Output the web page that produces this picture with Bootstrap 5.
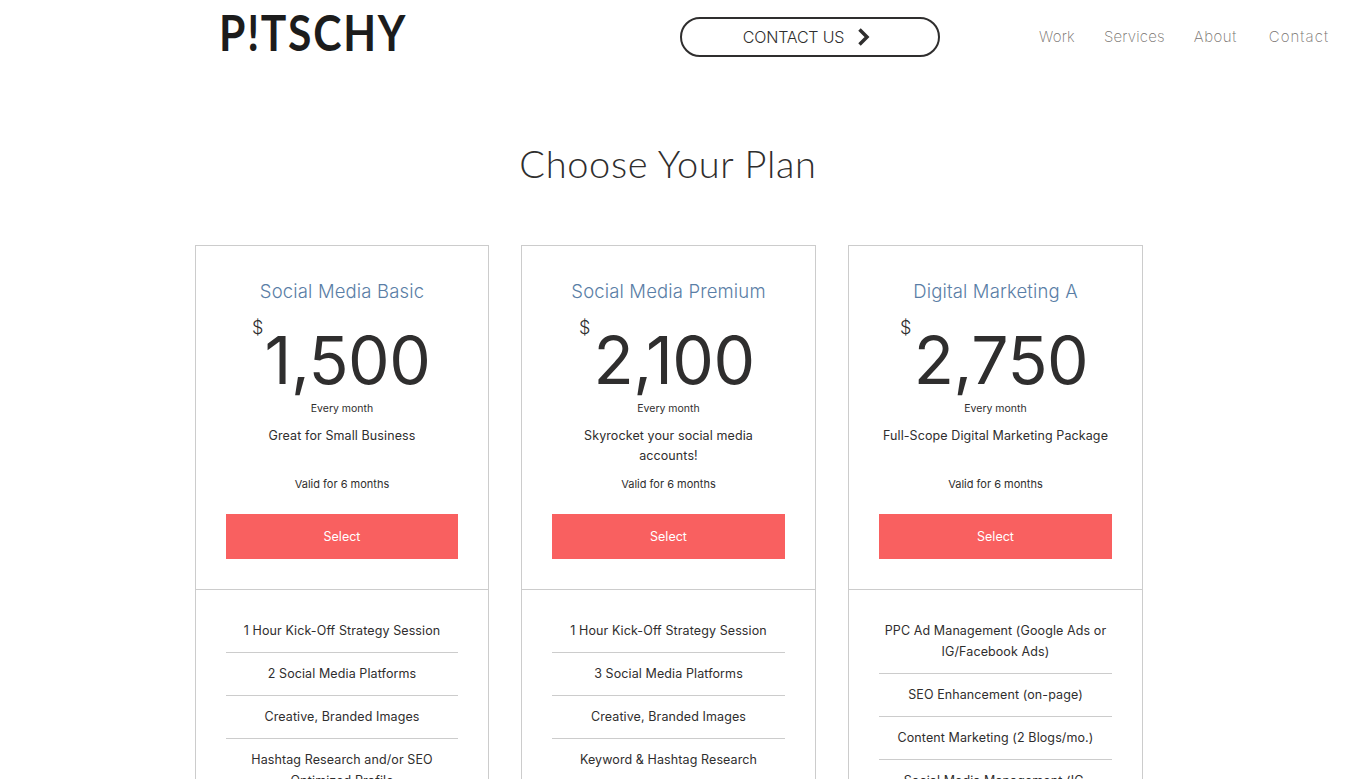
<!DOCTYPE html>
<html lang="en">
<head>
<meta charset="utf-8">
<title>Pitschy</title>
<link href="https://cdn.jsdelivr.net/npm/bootstrap@5.3.0/dist/css/bootstrap.min.css" rel="stylesheet">
<style>
html,body{height:779px;overflow:hidden;background:#fff}
body{font-family:"Inter","Liberation Sans",sans-serif;color:#2f2e2e}
.page-shell{height:779px;overflow:hidden}
.top-bar{height:74px}
.logo-cell{width:406px;padding-left:219px;padding-top:5px}
.brand-text{font-family:"Lato",sans-serif;font-weight:700;font-size:49px;line-height:54px;letter-spacing:2px;color:#1c1c1c;display:block;transform:scaleX(.87);transform-origin:left center;white-space:nowrap}
.btn-cell{margin-left:274px;padding-top:17px;width:260px}
.contact-pill{width:260px;height:40px;border:2px solid #2f2e2e;border-radius:20px;background:#fff;font-family:"Inter",sans-serif;font-weight:300;font-size:16px;letter-spacing:-.2px;color:#2f2e2e;text-decoration:none;padding-right:6px;gap:13px}
.nav-cell{margin-left:99px;gap:29px;padding-top:27px;font-family:"Inter",sans-serif;font-weight:200;font-size:15px;line-height:20px;letter-spacing:.2px}
.nav-cell a{color:#77736f;text-decoration:none}
.nav-cell .nav-about{letter-spacing:.5px}
.nav-cell .nav-contact{letter-spacing:1.05px;margin-left:3px}
.plan-heading{font-family:"Lato",sans-serif;font-weight:300;font-size:38px;line-height:46px;letter-spacing:.65px;color:#2f2e2e;text-align:center;margin:66px 0 59px;width:1336px}
.plans-wrap{margin-left:195px;gap:32px;width:948px;align-items:flex-start}
.plan-box{width:295px;border:1px solid #ccc;flex:none;height:700px}
.plan-box:first-child{width:294px}
.plan-top{height:344px;border-bottom:1px solid #ccc;padding:33px 30px 0;text-align:center}
.plan-name{font-size:18.5px;line-height:24px;color:#5a7ea6;margin:0;font-weight:300;letter-spacing:.15px}
.price-row{height:81px;position:relative;margin-top:15px;padding-left:11px}
.price-num{font-size:66px;line-height:84px;color:#2f2e2e;font-weight:400;letter-spacing:-.5px;display:block}
.price-sym{position:absolute;top:-2px;font-size:18px;line-height:24px;font-weight:300}
.every{font-size:10.5px;line-height:14px;margin-top:3px}
.tagline{font-size:12.5px;line-height:20px;margin-top:10px;height:40px;letter-spacing:.1px}
.valid{font-size:11px;line-height:14px;margin-top:11px}
.select-btn{background:#f96060;color:#fff;border:0;border-radius:0;width:100%;height:45px;margin-top:23px;font-size:12.5px;padding:8px 0 6px}
.select-btn:hover{background:#f96060;color:#fff}
.feature-list{padding:20px 30px 0;margin:0;list-style:none}
.feature-list li{font-size:12.5px;line-height:21px;letter-spacing:.1px;text-align:center;padding:10px 0 11px;border-bottom:1px solid #ccc}
</style>
</head>
<body>
<div class="page-shell">
  <header class="top-bar d-flex">
    <div class="logo-cell flex-shrink-0"><span class="brand-text">P!TSCHY</span></div>
    <div class="btn-cell flex-shrink-0">
      <a href="#" class="contact-pill d-flex align-items-center justify-content-center">CONTACT US
        <svg width="14" height="18" viewBox="0 0 14 18" aria-hidden="true"><path d="M2.5 1.5 10 9 2.5 16.5" fill="none" stroke="#2f2e2e" stroke-width="3.5"/></svg>
      </a>
    </div>
    <nav class="nav-cell d-flex">
      <a href="#">Work</a><a href="#">Services</a><a href="#" class="nav-about">About</a><a href="#" class="nav-contact">Contact</a>
    </nav>
  </header>
  <h1 class="plan-heading">Choose Your Plan</h1>
  <div class="plans-wrap d-flex">
    <section class="plan-box">
      <div class="plan-top">
        <h2 class="plan-name">Social Media Basic</h2>
        <div class="price-row"><span class="price-sym" style="left:26px">$</span><span class="price-num">1,500</span></div>
        <div class="every">Every month</div>
        <div class="tagline">Great for Small Business</div>
        <div class="valid">Valid for 6 months</div>
        <button class="btn select-btn">Select</button>
      </div>
      <ul class="feature-list">
        <li>1 Hour Kick-Off Strategy Session</li>
        <li>2 Social Media Platforms</li>
        <li>Creative, Branded Images</li>
        <li>Hashtag Research and/or SEO Optimized Profile</li>
      </ul>
    </section>
    <section class="plan-box">
      <div class="plan-top">
        <h2 class="plan-name">Social Media Premium</h2>
        <div class="price-row"><span class="price-sym" style="left:27px">$</span><span class="price-num">2,100</span></div>
        <div class="every">Every month</div>
        <div class="tagline">Skyrocket your social media<br>accounts!</div>
        <div class="valid">Valid for 6 months</div>
        <button class="btn select-btn">Select</button>
      </div>
      <ul class="feature-list">
        <li>1 Hour Kick-Off Strategy Session</li>
        <li>3 Social Media Platforms</li>
        <li>Creative, Branded Images</li>
        <li>Keyword &amp; Hashtag Research</li>
      </ul>
    </section>
    <section class="plan-box">
      <div class="plan-top">
        <h2 class="plan-name">Digital Marketing A</h2>
        <div class="price-row"><span class="price-sym" style="left:21px">$</span><span class="price-num">2,750</span></div>
        <div class="every">Every month</div>
        <div class="tagline">Full-Scope Digital Marketing Package</div>
        <div class="valid">Valid for 6 months</div>
        <button class="btn select-btn">Select</button>
      </div>
      <ul class="feature-list">
        <li>PPC Ad Management (Google Ads or IG/Facebook Ads)</li>
        <li>SEO Enhancement (on-page)</li>
        <li>Content Marketing (2 Blogs/mo.)</li>
        <li>Social Media Management (IG, Facebook)</li>
      </ul>
    </section>
  </div>
</div>
<script src="https://cdn.jsdelivr.net/npm/bootstrap@5.3.0/dist/js/bootstrap.bundle.min.js"></script>
</body>
</html>
